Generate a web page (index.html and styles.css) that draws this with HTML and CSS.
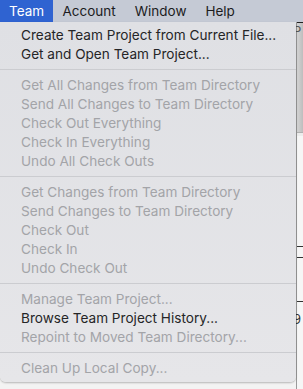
FILE: index.html
```html
<!DOCTYPE html>
<html lang="en">
<head>
  <meta charset="UTF-8">
  <title>Team menu</title>
  <link rel="stylesheet" href="styles.css">
</head>
<body>

<!-- MENU BAR -->
<div class="menubar">
  <div class="title open">Team</div>
  <div class="title">Account</div>
  <div class="title">Window</div>
  <div class="title">Help</div>
</div>

<div class="desk">
  <!-- DROPDOWN -->
  <div class="menu">
    <div class="item">Create Team Project from Current File...</div>
    <div class="item">Get and Open Team Project...</div>
    <div class="sep"></div>
    <div class="item off">Get All Changes from Team Directory</div>
    <div class="item off">Send All Changes to Team Directory</div>
    <div class="item off">Check Out Everything</div>
    <div class="item off">Check In Everything</div>
    <div class="item off">Undo All Check Outs</div>
    <div class="sep"></div>
    <div class="item off">Get Changes from Team Directory</div>
    <div class="item off">Send Changes to Team Directory</div>
    <div class="item off">Check Out</div>
    <div class="item off">Check In</div>
    <div class="item off">Undo Check Out</div>
    <div class="sep"></div>
    <div class="item off">Manage Team Project...</div>
    <div class="item">Browse Team Project History...</div>
    <div class="item off">Repoint to Moved Team Directory...</div>
    <div class="sep"></div>
    <div class="item off">Clean Up Local Copy...</div>
  </div>

  <!-- window behind the menu -->
  <div class="behind">
    <div class="toolbar"><span class="peek">P</span></div>
    <div class="ruler"></div>
    <div class="sheet">
      <div class="rule r1"></div>
      <div class="rule r2"></div>
      <div class="rule r3"></div>
      <span class="peek9">9</span>
    </div>
  </div>
</div>

</body>
</html>
```

FILE: styles.css
```css
* { margin: 0; padding: 0; box-sizing: border-box; }
body {
  font-family: Inter, "Liberation Sans", sans-serif;
  width: 303px;
  height: 389px;
  overflow: hidden;
  background-color: #f3f3f3;
}

.menubar {
  display: flex;
  height: 22px;
  background-color: #c5cad5;
  font-size: 13.5px;
  color: #1c1c1e;
}
.title {
  padding: 0 9.5px;
  line-height: 22px;
}
.title.open {
  background-color: #2f63d1;
  color: white;
  padding: 0 9px;
  width: 53px;
}

.desk {
  display: flex;
  height: 367px;
}

.menu {
  width: 296px;
  height: 359.5px;
  padding: 3.5px 0 4px;
  background: linear-gradient(to bottom, #dfe0e4, #e6e6e9);
  border-radius: 0 0 6px 6px;
  box-shadow: 0 1px 2px rgba(0, 0, 0, 0.25);
  font-size: 13.6px;
  position: relative;
  z-index: 2;
}
.item {
  height: 19px;
  line-height: 19px;
  padding-left: 21px;
  color: #252527;
  white-space: nowrap;
}
.item.off { color: #a3a4a8; }
.sep {
  height: 1px;
  margin: 5.5px 0;
  background-color: #cbccd0;
}

.behind {
  flex: 1;
  display: flex;
  flex-direction: column;
  border-left: 1px solid #9a9a9a;
}
.toolbar {
  height: 110px;
  background: linear-gradient(to right, #d4d4d4, #bdbdbd);
  border-top: 1px solid #222;
  font-size: 13px;
  color: #555;
}
.peek { margin-left: -4px; }
.ruler {
  height: 4px;
  border-top: 1px solid #b0b0b0;
  background-color: #ececec;
}
.sheet {
  flex: 1;
  background-color: #f6f6f6;
  font-size: 13px;
}
.rule { height: 1px; background-color: #333; }
.r1 { margin-top: 110px; }
.r2 { margin-top: 10px; }
.r3 { margin-top: 43px; }
.peek9 { display: block; margin: 9px 0 0 -4px; color: #333; }
```
